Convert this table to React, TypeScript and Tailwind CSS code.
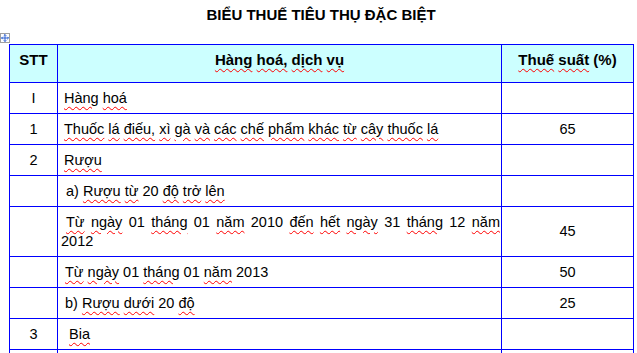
import React from "react";

const font = { fontFamily: '"Liberation Sans", Arial, sans-serif' };

function Sp({ text }: { text: string }) {
  const parts = text.split(" ");
  return (
    <>
      {parts.map((w, i) => {
        const marked = /\p{L}/u.test(w) && !/^[a-b]\)$/.test(w);
        return (
          <React.Fragment key={i}>
            {i > 0 && " "}
            {marked ? (
              <span className="underline decoration-wavy decoration-[#ff0000] decoration-1 underline-offset-[3px]">
                {w}
              </span>
            ) : (
              w
            )}
          </React.Fragment>
        );
      })}
    </>
  );
}

type Row = { stt: string; name: string; rate: string; tall?: boolean; pl?: string };

const rows: Row[] = [
  { stt: "I", name: "Hàng hoá", rate: "" },
  { stt: "1", name: "Thuốc lá điếu, xì gà và các chế phẩm khác từ cây thuốc lá", rate: "65" },
  { stt: "2", name: "Rượu", rate: "" },
  { stt: "", name: "a) Rượu từ 20 độ trở lên", rate: "", pl: "pl-[8px]" },
  {
    stt: "",
    name: "Từ ngày 01 tháng 01 năm 2010 đến hết ngày 31 tháng 12 năm 2012",
    rate: "45",
    tall: true,
  },
  { stt: "", name: "Từ ngày 01 tháng 01 năm 2013", rate: "50", pl: "pl-[7px]" },
  { stt: "", name: "b) Rượu dưới 20 độ", rate: "25", pl: "pl-[7px]" },
  { stt: "3", name: "Bia", rate: "", pl: "pl-[11px]" },
  { stt: "", name: "", rate: "" },
];

function MoveHandle() {
  return (
    <div className="absolute left-[-9px] top-[-11px] flex h-[10px] w-[10px] items-center justify-center border border-[#a0a0a0] bg-white">
      <svg width="8" height="8" viewBox="0 0 8 8" fill="none" stroke="#2a5fd0" strokeWidth="1">
        <path d="M4 0.5v7M0.5 4h7" />
        <path d="M2.8 1.7L4 0.5l1.2 1.2M2.8 6.3L4 7.5l1.2-1.2M1.7 2.8L0.5 4l1.2 1.2M6.3 2.8L7.5 4 6.3 5.2" />
      </svg>
    </div>
  );
}

export default function App() {
  return (
    <div className="h-[353px] w-[637px] overflow-hidden bg-white text-[14.5px] text-black" style={font}>
      <div className="w-[633px] pl-[9px]">
        <h1 className="pt-[6px] text-center text-[15px] font-bold leading-[18px]">
          BIỂU THUẾ TIÊU THỤ ĐẶC BIỆT
        </h1>
        <div className="relative mt-[20px]">
          <MoveHandle />
          <table className="w-[625px] table-fixed border-collapse">
            <colgroup>
              <col className="w-[48px]" />
              <col className="w-[444px]" />
              <col />
            </colgroup>
            <thead>
              <tr className="h-[38px] bg-[#ccffff] text-[15px]">
                <th className="border border-[#0000ff] pb-[6px] text-center align-middle font-bold">STT</th>
                <th className="border border-[#0000ff] pb-[6px] text-center align-middle font-bold">
                  <Sp text="Hàng hoá, dịch vụ" />
                </th>
                <th className="border border-[#0000ff] pb-[6px] text-center align-middle font-bold">
                  <Sp text="Thuế suất (%)" />
                </th>
              </tr>
            </thead>
            <tbody>
              {rows.map((r, i) => (
                <tr key={i} className={r.tall ? "h-[50px]" : "h-[31px]"}>
                  <td className="border border-[#0000ff] text-center align-middle leading-[19px]">{r.stt}</td>
                  <td
                    className={`border border-[#0000ff] align-middle leading-[19px] ${
                      r.tall ? "pl-[3px] pr-[1px] indent-[5px] text-justify" : r.pl ?? "pl-[6px]"
                    }`}
                  >
                    <Sp text={r.name} />
                  </td>
                  <td className="border border-[#0000ff] text-center align-middle leading-[19px]">{r.rate}</td>
                </tr>
              ))}
            </tbody>
          </table>
        </div>
      </div>
    </div>
  );
}
